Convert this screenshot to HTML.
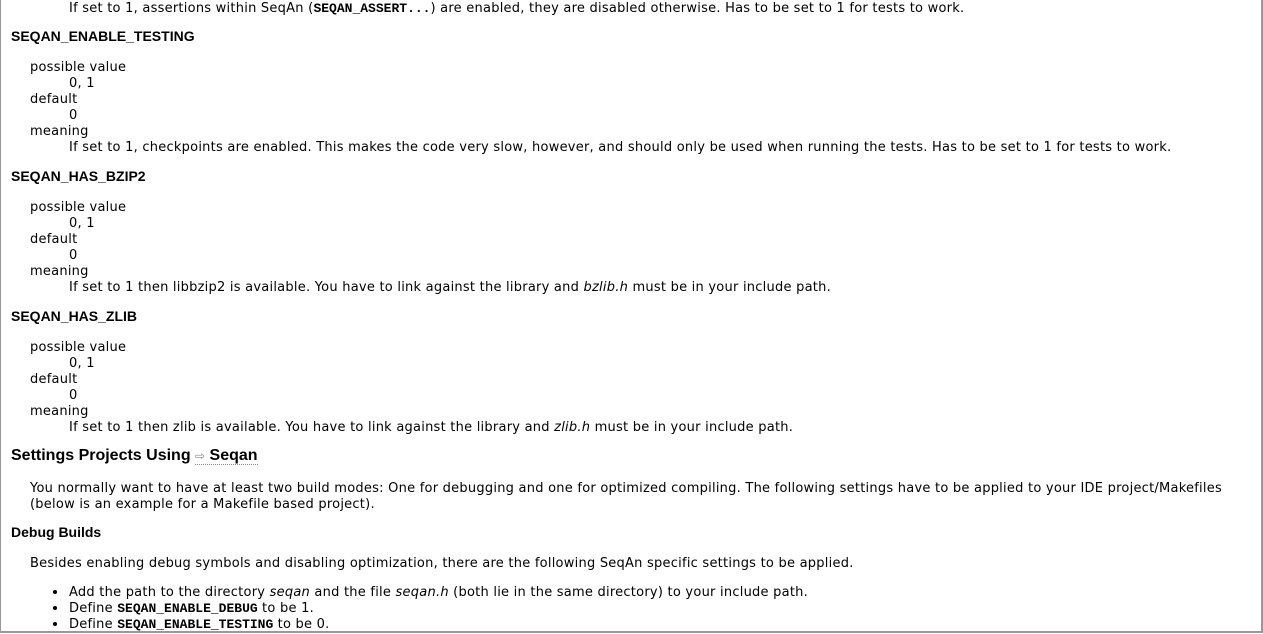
<!DOCTYPE html>
<html><head><meta charset="utf-8"><style>
html,body{margin:0;padding:0;background:#fff;}
body{width:1263px;height:634px;position:relative;overflow:hidden;font-family:"DejaVu Sans","Liberation Sans",sans-serif;font-size:13px;color:#000;}
.frame{position:absolute;left:0;top:-2px;width:1263px;height:635px;border:1px solid #999;border-top:none;box-sizing:border-box;border-right:2px solid #999;border-bottom:2px solid #999;}
.l{position:absolute;white-space:nowrap;line-height:16px;letter-spacing:0.24px;}
.h{position:absolute;white-space:nowrap;font-family:"Liberation Sans",sans-serif;font-weight:bold;font-size:14px;line-height:16px;}
.h2{font-size:16px;}
code{font-family:"Liberation Mono",monospace;font-weight:bold;font-size:13px;letter-spacing:0;}
.b{position:absolute;width:4px;height:4px;border-radius:50%;background:#000;}
a{color:#000;text-decoration:none;border-bottom:1px dotted #888;}
</style></head><body>
<div class="frame"></div>
<div class="l" style="left:69px;top:1px">If set to 1, assertions within SeqAn (<code>SEQAN_ASSERT...</code>) are enabled, they are disabled otherwise. Has to be set to 1 for tests to work.</div>

<div class="h" style="left:11px;top:28px">SEQAN_ENABLE_TESTING</div>
<div class="l" style="left:30px;top:60px">possible value</div>
<div class="l" style="left:69px;top:76px">0, 1</div>
<div class="l" style="left:30px;top:92px">default</div>
<div class="l" style="left:69px;top:108px">0</div>
<div class="l" style="left:30px;top:124px">meaning</div>
<div class="l" style="left:69px;top:140px">If set to 1, checkpoints are enabled. This makes the code very slow, however, and should only be used when running the tests. Has to be set to 1 for tests to work.</div>

<div class="h" style="left:11px;top:168px">SEQAN_HAS_BZIP2</div>
<div class="l" style="left:30px;top:200px">possible value</div>
<div class="l" style="left:69px;top:216px">0, 1</div>
<div class="l" style="left:30px;top:232px">default</div>
<div class="l" style="left:69px;top:248px">0</div>
<div class="l" style="left:30px;top:264px">meaning</div>
<div class="l" style="left:69px;top:280px">If set to 1 then libbzip2 is available. You have to link against the library and <i>bzlib.h</i> must be in your include path.</div>

<div class="h" style="left:11px;top:308px">SEQAN_HAS_ZLIB</div>
<div class="l" style="left:30px;top:340px">possible value</div>
<div class="l" style="left:69px;top:356px">0, 1</div>
<div class="l" style="left:30px;top:372px">default</div>
<div class="l" style="left:69px;top:388px">0</div>
<div class="l" style="left:30px;top:404px">meaning</div>
<div class="l" style="left:69px;top:420px">If set to 1 then zlib is available. You have to link against the library and <i>zlib.h</i> must be in your include path.</div>

<div class="h h2" style="left:11px;top:448px">Settings Projects Using <a><span style="font-weight:normal;font-size:12px;color:#888">⇨</span> Seqan</a></div>
<div class="l" style="left:30px;top:481px">You normally want to have at least two build modes: One for debugging and one for optimized compiling. The following settings have to be applied to your IDE project/Makefiles</div>
<div class="l" style="left:30px;top:497px">(below is an example for a Makefile based project).</div>

<div class="h" style="left:11px;top:524px">Debug Builds</div>
<div class="l" style="left:30px;top:556px">Besides enabling debug symbols and disabling optimization, there are the following SeqAn specific settings to be applied.</div>
<div class="b" style="left:53px;top:590px"></div>
<div class="l" style="left:69px;top:585px">Add the path to the directory <i>seqan</i> and the file <i>seqan.h</i> (both lie in the same directory) to your include path.</div>
<div class="b" style="left:53px;top:606px"></div>
<div class="l" style="left:69px;top:601px">Define <code>SEQAN_ENABLE_DEBUG</code> to be 1.</div>
<div class="b" style="left:53px;top:622px"></div>
<div class="l" style="left:69px;top:617px">Define <code>SEQAN_ENABLE_TESTING</code> to be 0.</div>
</body></html>
